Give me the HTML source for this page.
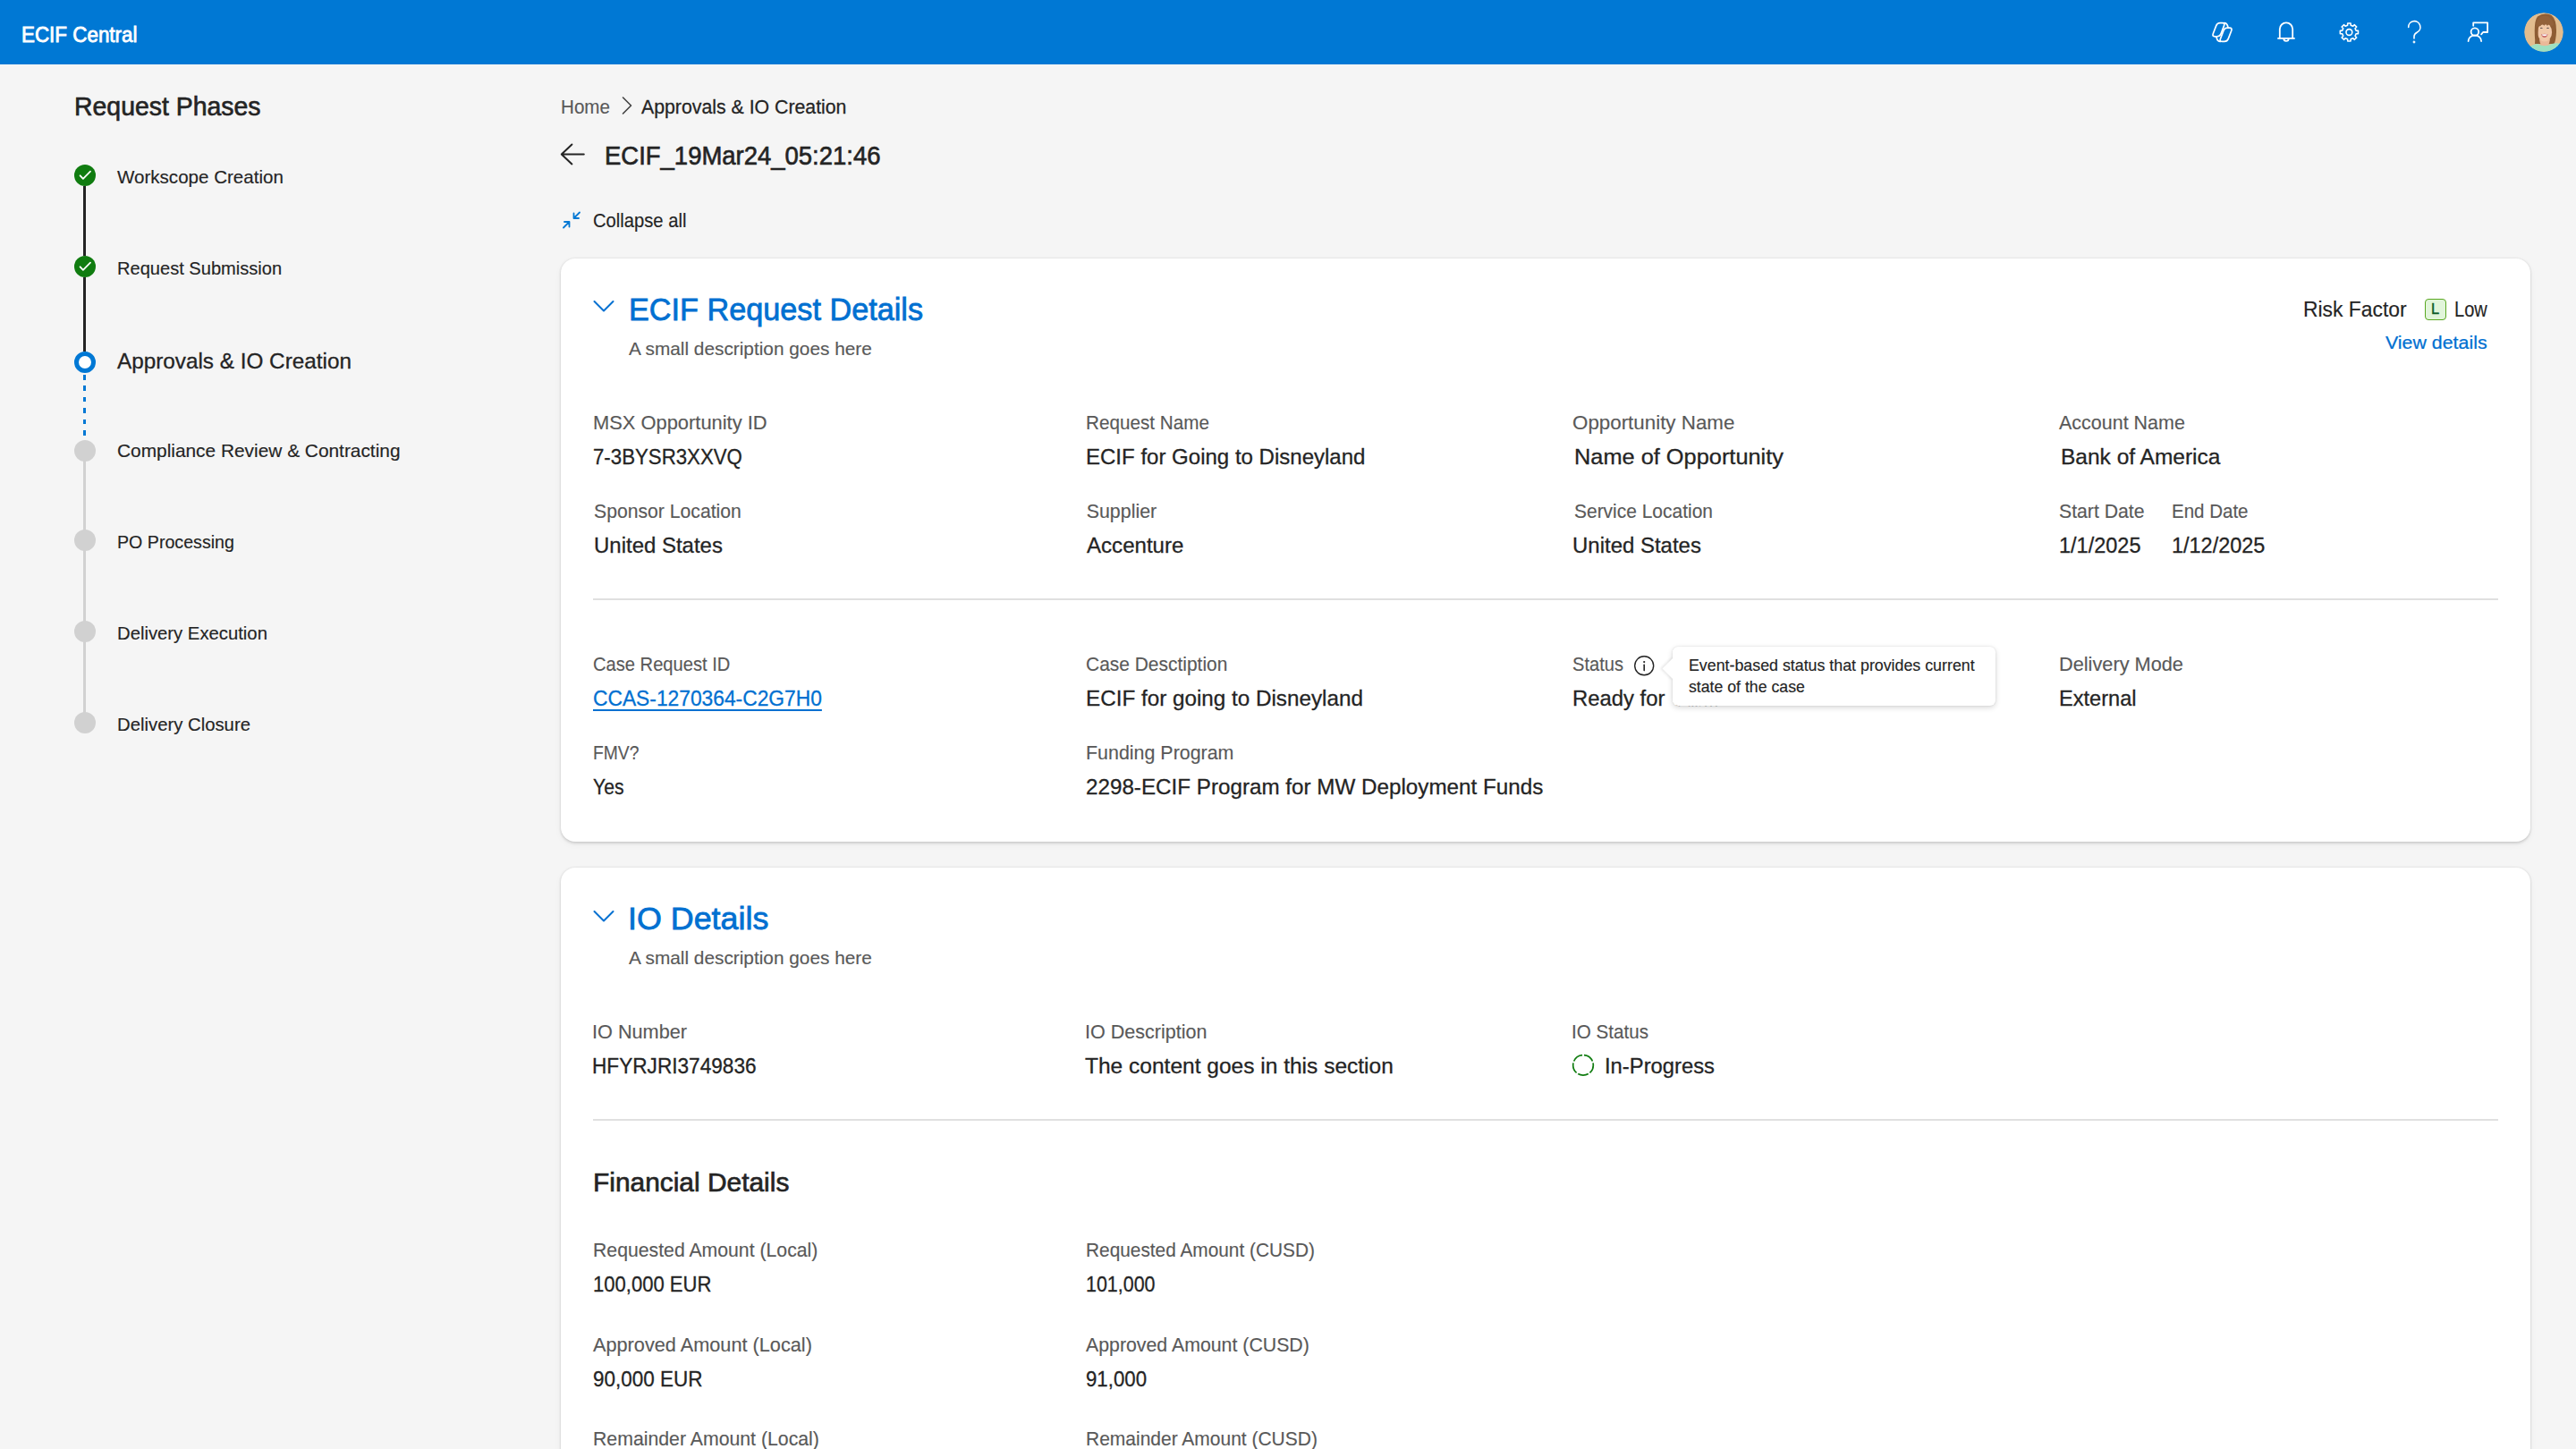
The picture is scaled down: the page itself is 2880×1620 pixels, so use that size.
<!DOCTYPE html>
<html><head><meta charset="utf-8"><style>
*{margin:0;padding:0;box-sizing:border-box}
html,body{width:2880px;height:1620px;overflow:hidden;background:#f5f5f5;font-family:"Liberation Sans",sans-serif}
.t{position:absolute;white-space:nowrap;line-height:1;transform-origin:0 0}
#hdr{position:absolute;left:0;top:0;width:2880px;height:72px;background:#0078d4}
#avatar{position:absolute;left:2822px;top:14px;width:44px;height:44px;border-radius:50%;overflow:hidden}
.vl{position:absolute;width:3px}
.dl{position:absolute;width:3px;background:repeating-linear-gradient(to bottom,#0078d4 0,#0078d4 5.5px,transparent 5.5px,transparent 12.4px)}
.dot{position:absolute;left:82.5px;width:24px;height:24px;border-radius:50%}
.dot.done{background:#107c10}
.dot.cur{background:#fff;border:5px solid #0078d4}
.dot.todo{background:#d1d1d1}
.dot svg{position:absolute;left:0;top:0}
.card{position:absolute;left:627px;width:2202px;background:#fff;border-radius:16px;box-shadow:0 1.5px 3px rgba(0,0,0,0.12),0 3px 9px rgba(0,0,0,0.04),0 0 3px rgba(0,0,0,0.08)}
.hr{position:absolute;left:663px;width:2130px;height:2px;background:#e0e0e0}
#lbadge{position:absolute;left:2710.7px;top:334.4px;width:24px;height:24px;border:1.7px solid #5aa822;background:#e1f5da;border-radius:4px}
#tip{position:absolute;left:1870px;top:723px;width:360.5px;height:66px;background:#fff;border-radius:6px;box-shadow:0 2px 6px rgba(0,0,0,0.16),0 0 2px rgba(0,0,0,0.12)}
#tip .arrow{position:absolute;left:-8.5px;top:15.5px;width:17px;height:17px;background:#fff;transform:rotate(45deg);box-shadow:-1.5px 1.5px 3px rgba(0,0,0,0.10)}
#tip .cover{position:absolute;left:0;top:4px;width:14px;height:58px;background:#fff}
</style></head><body>
<div id="hdr"></div>
<div class="t" style="left:23.7px;top:27px;font-size:24.4px;color:#ffffff;transform:scaleX(0.9184);-webkit-text-stroke:0.29px #ffffff;-webkit-text-stroke:0.85px #fff;">ECIF Central</div>
<svg width="420" height="72" viewBox="0 0 420 72" style="position:absolute;left:2448px;top:0">
<g fill="none" stroke="#fff" stroke-width="1.8" stroke-linecap="round" stroke-linejoin="round">
 <g transform="translate(36.5,36)" stroke-width="1.7">
  <path d="M-6.74,-7.41 Q-5.60,-10.40 -2.40,-10.40 L0.00,-10.40 Q3.20,-10.40 2.06,-7.41 L-1.46,1.81 Q-2.60,4.80 -5.80,4.80 L-8.20,4.80 Q-11.40,4.80 -10.26,1.81 Z"/>
  <path d="M1.46,-1.81 Q2.60,-4.80 5.80,-4.80 L8.20,-4.80 Q11.40,-4.80 10.26,-1.81 L6.74,7.41 Q5.60,10.40 2.40,10.40 L0.00,10.40 Q-3.20,10.40 -2.06,7.41 Z"/>
  <path d="M2.2,-10.4 Q5,-10.4 6,-7.2 L6.6,-4.8"/>
  <path d="M-2.2,10.4 Q-5,10.4 -6,7.2 L-6.6,4.8"/>
 </g>
 <g transform="translate(108,36)">
  <path d="M-7.2,6.6 V-3.4 A7.2,7.2 0 0 1 7.2,-3.4 V6.6"/>
  <path d="M-9,6.9 H9"/>
  <path d="M-2.7,7.2 A2.7,2.7 0 0 0 2.7,7.2"/>
 </g>
 <g transform="translate(178.4,36)" stroke-width="1.6">
  <circle r="3.4"/>
  <path d="M-1.78,-7.70 L-1.67,-10.06 L1.67,-10.06 L1.78,-7.70 L4.18,-6.70 L5.93,-8.30 L8.30,-5.93 L6.70,-4.18 L7.70,-1.78 L10.06,-1.67 L10.06,1.67 L7.70,1.78 L6.70,4.18 L8.30,5.93 L5.93,8.30 L4.18,6.70 L1.78,7.70 L1.67,10.06 L-1.67,10.06 L-1.78,7.70 L-4.18,6.70 L-5.93,8.30 L-8.30,5.93 L-6.70,4.18 L-7.70,1.78 L-10.06,1.67 L-10.06,-1.67 L-7.70,-1.78 L-6.70,-4.18 L-8.30,-5.93 L-5.93,-8.30 L-4.18,-6.70 Z"/>
 </g>
 <g transform="translate(251,36)">
  <path d="M-6.3,-5.6 A6.6,6.6 0 1 1 3.2,0.2 C0.8,1.6 0,2.8 0,4.8 V7" stroke-width="1.6"/>
  <circle cx="0" cy="11" r="0.5" fill="#fff"/>
 </g>
 <g transform="translate(322.5,36)">
  <path d="M-5.3,-7.2 V-10.6 H10.6 V0 H5.6 L3.6,2.4"/>
  <circle cx="-3.6" cy="-0.4" r="4.3"/>
  <path d="M-10.9,10 A7.2,6.6 0 0 1 3.6,10"/>
 </g>
</g>
</svg>
<div id="avatar"><svg width="44" height="44" viewBox="0 0 44 44">
<defs><clipPath id="ac"><circle cx="22" cy="22" r="21.8"/></clipPath></defs>
<g clip-path="url(#ac)">
<rect width="44" height="44" fill="#e2bd8f"/>
<path d="M12.2,31 Q10.5,10 15,4.5 Q22,-0.5 30.5,3 Q36.5,8 36,22 Q35.5,31 33.5,35 L12,35 Z" fill="#8e5d34"/>
<path d="M17,30 Q18,38 23,38 Q28,38 29,30 Z" fill="#ebb999"/>
<ellipse cx="23" cy="22" rx="8.1" ry="10.6" fill="#f1c9a8"/>
<path d="M13.5,18 Q13,5 22,3.5 Q32,3.5 33.5,17 Q31,13.5 29.5,15.5 Q28,12 26,15 Q24,11.5 22.5,14.8 Q20,12 18,15.5 Q16,13 13.5,18 Z" fill="#93623a"/>
<path d="M13,16 Q12.5,27 14.5,32 L16.5,32 Q15,25 15.8,17 Z" fill="#8e5d34"/>
<path d="M31.5,15 Q33,25 30.5,33 L34,33 Q36,22 33,14 Z" fill="#8e5d34"/>
<ellipse cx="19.3" cy="17.4" rx="1.4" ry="0.7" fill="#6b5a55"/>
<ellipse cx="26.5" cy="17.4" rx="1.4" ry="0.7" fill="#6b5a55"/>
<path d="M19,24.3 Q22.8,23.3 26.6,24.3 Q25.6,28 22.8,28 Q20,28 19,24.3 Z" fill="#c96a6a"/>
<path d="M19.6,24.5 Q22.8,23.8 26,24.5 Q25.6,26 22.8,26.2 Q20,26 19.6,24.5 Z" fill="#ffffff"/>
<path d="M0,44 L2,41 Q8,36 15,35 Q23,39.5 31,35 Q38,33.5 44,35.5 L44,44 Z" fill="#9ee0c1"/>
</g></svg></div>
<div class="t" style="left:83.0px;top:105px;font-size:29px;color:#242424;transform:scaleX(0.9798);-webkit-text-stroke:0.64px #242424;">Request Phases</div>
<div class="vl" style="left:93px;top:208px;height:78px;background:#242424"></div>
<div class="vl" style="left:93px;top:310px;height:83px;background:#242424"></div>
<div class="dl" style="left:93px;top:419px;height:72px;"></div>
<div class="vl" style="left:93px;top:515px;height:290px;background:#d1d1d1"></div>
<div class="dot done" style="top:184.4px"><svg width="24" height="24" viewBox="0 0 24 24"><path d="M6.6,12.3 L9.9,15.9 L18,7.7" fill="none" stroke="#fff" stroke-width="1.8" stroke-linecap="round" stroke-linejoin="round"/></svg></div>
<div class="t" style="left:131.2px;top:188px;font-size:20.7px;color:#242424;transform:scaleX(0.9936);-webkit-text-stroke:0.15px #242424;">Workscope Creation</div>
<div class="dot done" style="top:286.3px"><svg width="24" height="24" viewBox="0 0 24 24"><path d="M6.6,12.3 L9.9,15.9 L18,7.7" fill="none" stroke="#fff" stroke-width="1.8" stroke-linecap="round" stroke-linejoin="round"/></svg></div>
<div class="t" style="left:131.2px;top:290px;font-size:20.7px;color:#242424;transform:scaleX(0.9705);-webkit-text-stroke:0.15px #242424;">Request Submission</div>
<div class="dot cur" style="top:393.0px"></div>
<div class="t" style="left:131.2px;top:392px;font-size:24.4px;color:#242424;transform:scaleX(0.9958);-webkit-text-stroke:0.29px #242424;">Approvals &amp; IO Creation</div>
<div class="dot todo" style="top:492.0px"></div>
<div class="t" style="left:131.2px;top:494px;font-size:20.7px;color:#242424;transform:scaleX(1.0083);-webkit-text-stroke:0.15px #242424;">Compliance Review &amp; Contracting</div>
<div class="dot todo" style="top:592.0px"></div>
<div class="t" style="left:131.2px;top:596px;font-size:20.7px;color:#242424;transform:scaleX(0.9486);-webkit-text-stroke:0.15px #242424;">PO Processing</div>
<div class="dot todo" style="top:694.0px"></div>
<div class="t" style="left:131.2px;top:698px;font-size:20.7px;color:#242424;transform:scaleX(0.9802);-webkit-text-stroke:0.15px #242424;">Delivery Execution</div>
<div class="dot todo" style="top:796.0px"></div>
<div class="t" style="left:131.2px;top:800px;font-size:20.7px;color:#242424;transform:scaleX(0.9816);-webkit-text-stroke:0.15px #242424;">Delivery Closure</div>
<div class="t" style="left:626.9px;top:110px;font-size:21.4px;color:#595959;transform:scaleX(0.9632);-webkit-text-stroke:0.15px #595959;">Home</div>
<svg style="position:absolute;left:694px;top:107px" width="14" height="22" viewBox="0 0 14 22"><path d="M2.5,2 L11.5,11 L2.5,20" fill="none" stroke="#424242" stroke-width="1.6" stroke-linecap="round" stroke-linejoin="round"/></svg>
<div class="t" style="left:716.5px;top:110px;font-size:21.4px;color:#242424;transform:scaleX(0.9948);-webkit-text-stroke:0.26px #242424;">Approvals &amp; IO Creation</div>
<svg style="position:absolute;left:625px;top:158px" width="32" height="30" viewBox="0 0 32 30"><path d="M27.8,14.4 H3 M14.4,3.5 L2.8,14.4 L14.4,25.4" fill="none" stroke="#242424" stroke-width="2" stroke-linecap="round" stroke-linejoin="round"/></svg>
<div class="t" style="left:675.5px;top:159px;font-size:29.5px;color:#242424;transform:scaleX(0.9312);-webkit-text-stroke:0.65px #242424;">ECIF_19Mar24_05:21:46</div>
<svg style="position:absolute;left:626px;top:234px" width="26" height="24" viewBox="0 0 26 24"><g fill="none" stroke="#0078d4" stroke-width="1.8" stroke-linecap="round" stroke-linejoin="round"><path d="M4,20.5 L10.5,14 M5,14 H10.5 V19.5"/><path d="M22,3.5 L15.5,10 M21,10 H15.5 V4.5"/></g></svg>
<div class="t" style="left:662.6px;top:237px;font-size:21.4px;color:#242424;transform:scaleX(0.9439);-webkit-text-stroke:0.15px #242424;">Collapse all</div>
<div class="card" style="top:289px;height:652px"></div>
<svg style="position:absolute;left:660px;top:331px" width="30" height="22" viewBox="0 0 30 22"><path d="M4.5,6 L15,16.5 L25.5,6" fill="none" stroke="#0070d1" stroke-width="2" stroke-linecap="round" stroke-linejoin="round"/></svg>
<div class="t" style="left:703.0px;top:329px;font-size:34.5px;color:#0070d1;transform:scaleX(0.9919);-webkit-text-stroke:0.76px #0070d1;">ECIF Request Details</div>
<div class="t" style="left:703.4px;top:381px;font-size:19.8px;color:#595959;transform:scaleX(1.0518);-webkit-text-stroke:0.15px #595959;">A small description goes here</div>
<div class="t" style="left:2575.2px;top:334px;font-size:24.4px;color:#242424;transform:scaleX(0.9384);-webkit-text-stroke:0.15px #242424;">Risk Factor</div>
<div id="lbadge"><div class="t" style="left:0;top:0;width:100%;text-align:center;line-height:21px;font-size:16.5px;color:#0b5a26;-webkit-text-stroke:0.4px #0b5a26">L</div></div>
<div class="t" style="left:2744.1px;top:334px;font-size:24.4px;color:#242424;transform:scaleX(0.8214);-webkit-text-stroke:0.15px #242424;">Low</div>
<div class="t" style="left:2666.6px;top:374px;font-size:19.9px;color:#0070d1;transform:scaleX(1.0737);-webkit-text-stroke:0.24px #0070d1;">View details</div>
<div class="t" style="left:663.2px;top:463px;font-size:21.4px;color:#595959;transform:scaleX(1.0231);-webkit-text-stroke:0.15px #595959;">MSX Opportunity ID</div>
<div class="t" style="left:663.2px;top:499px;font-size:24.4px;color:#242424;transform:scaleX(0.9121);-webkit-text-stroke:0.29px #242424;">7-3BYSR3XXVQ</div>
<div class="t" style="left:1213.7px;top:463px;font-size:21.4px;color:#595959;transform:scaleX(0.9671);-webkit-text-stroke:0.15px #595959;">Request Name</div>
<div class="t" style="left:1213.7px;top:499px;font-size:24.4px;color:#242424;transform:scaleX(0.9849);-webkit-text-stroke:0.29px #242424;">ECIF for Going to Disneyland</div>
<div class="t" style="left:1757.8px;top:463px;font-size:21.4px;color:#595959;transform:scaleX(1.0449);-webkit-text-stroke:0.15px #595959;">Opportunity Name</div>
<div class="t" style="left:1760.0px;top:499px;font-size:24.4px;color:#242424;transform:scaleX(1.0395);-webkit-text-stroke:0.29px #242424;">Name of Opportunity</div>
<div class="t" style="left:2302.2px;top:463px;font-size:21.4px;color:#595959;transform:scaleX(1.0043);-webkit-text-stroke:0.15px #595959;">Account Name</div>
<div class="t" style="left:2304.2px;top:499px;font-size:24.4px;color:#242424;transform:scaleX(1.0045);-webkit-text-stroke:0.29px #242424;">Bank of America</div>
<div class="t" style="left:664.0px;top:562px;font-size:21.4px;color:#595959;transform:scaleX(0.9904);-webkit-text-stroke:0.15px #595959;">Sponsor Location</div>
<div class="t" style="left:664.0px;top:598px;font-size:24.4px;color:#242424;transform:scaleX(0.9829);-webkit-text-stroke:0.29px #242424;">United States</div>
<div class="t" style="left:1214.7px;top:562px;font-size:21.4px;color:#595959;transform:scaleX(1.0000);-webkit-text-stroke:0.15px #595959;">Supplier</div>
<div class="t" style="left:1214.7px;top:598px;font-size:24.4px;color:#242424;transform:scaleX(0.9873);-webkit-text-stroke:0.29px #242424;">Accenture</div>
<div class="t" style="left:1759.5px;top:562px;font-size:21.4px;color:#595959;transform:scaleX(0.9798);-webkit-text-stroke:0.15px #595959;">Service Location</div>
<div class="t" style="left:1758.2px;top:598px;font-size:24.4px;color:#242424;transform:scaleX(0.9829);-webkit-text-stroke:0.29px #242424;">United States</div>
<div class="t" style="left:2302.2px;top:562px;font-size:21.4px;color:#595959;transform:scaleX(0.9917);-webkit-text-stroke:0.15px #595959;">Start Date</div>
<div class="t" style="left:2302.2px;top:598px;font-size:24.4px;color:#242424;transform:scaleX(0.9632);-webkit-text-stroke:0.29px #242424;">1/1/2025</div>
<div class="t" style="left:2428.2px;top:562px;font-size:21.4px;color:#595959;transform:scaleX(0.9585);-webkit-text-stroke:0.15px #595959;">End Date</div>
<div class="t" style="left:2428.2px;top:598px;font-size:24.4px;color:#242424;transform:scaleX(0.9622);-webkit-text-stroke:0.29px #242424;">1/12/2025</div>
<div class="hr" style="top:668.5px"></div>
<div class="t" style="left:662.7px;top:733px;font-size:21.4px;color:#595959;transform:scaleX(0.9417);-webkit-text-stroke:0.15px #595959;">Case Request ID</div>
<div class="t" style="left:662.7px;top:769px;font-size:24.4px;color:#0070d1;transform:scaleX(0.9343);-webkit-text-stroke:0.29px #0070d1;text-decoration:underline;text-underline-offset:4px;text-decoration-thickness:1.5px;">CCAS-1270364-C2G7H0</div>
<div class="t" style="left:1213.7px;top:733px;font-size:21.4px;color:#595959;transform:scaleX(0.9796);-webkit-text-stroke:0.15px #595959;">Case Desctiption</div>
<div class="t" style="left:1213.7px;top:769px;font-size:24.4px;color:#242424;transform:scaleX(0.9939);-webkit-text-stroke:0.29px #242424;">ECIF for going to Disneyland</div>
<div class="t" style="left:1757.8px;top:733px;font-size:21.4px;color:#595959;transform:scaleX(0.9390);-webkit-text-stroke:0.15px #595959;">Status</div>
<div class="t" style="left:1757.8px;top:769px;font-size:24.4px;color:#242424;transform:scaleX(0.9783);-webkit-text-stroke:0.29px #242424;">Ready for</div>
<div class="t" style="left:1871.2px;top:769px;font-size:24.4px;color:#242424;transform:scaleX(0.7849);-webkit-text-stroke:0.29px #242424;">Subm</div>
<div class="t" style="left:2302.2px;top:733px;font-size:21.4px;color:#595959;transform:scaleX(1.0161);-webkit-text-stroke:0.15px #595959;">Delivery Mode</div>
<div class="t" style="left:2302.2px;top:769px;font-size:24.4px;color:#242424;transform:scaleX(0.9665);-webkit-text-stroke:0.29px #242424;">External</div>
<div class="t" style="left:662.7px;top:832px;font-size:21.4px;color:#595959;transform:scaleX(0.9019);-webkit-text-stroke:0.15px #595959;">FMV?</div>
<div class="t" style="left:662.7px;top:868px;font-size:24.4px;color:#242424;transform:scaleX(0.8668);-webkit-text-stroke:0.29px #242424;">Yes</div>
<div class="t" style="left:1213.7px;top:832px;font-size:21.4px;color:#595959;transform:scaleX(1.0012);-webkit-text-stroke:0.15px #595959;">Funding Program</div>
<div class="t" style="left:1213.7px;top:868px;font-size:24.4px;color:#242424;transform:scaleX(0.9926);-webkit-text-stroke:0.29px #242424;">2298-ECIF Program for MW Deployment Funds</div>
<svg style="position:absolute;left:1826px;top:732px" width="24" height="24" viewBox="0 0 24 24"><circle cx="12.2" cy="12.3" r="10.5" fill="none" stroke="#242424" stroke-width="1.4"/><path d="M12.2,11.2 V17.6" stroke="#242424" stroke-width="1.6" stroke-linecap="round"/><circle cx="12.2" cy="8.1" r="1.1" fill="#242424"/></svg>
<div id="tip"><div class="arrow"></div><div class="cover"></div></div>
<div class="t" style="left:1888.2px;top:735px;font-size:18.3px;color:#242424;transform:scaleX(0.9738);-webkit-text-stroke:0.15px #242424;">Event-based status that provides current</div>
<div class="t" style="left:1888.2px;top:759px;font-size:18.3px;color:#242424;transform:scaleX(0.9680);-webkit-text-stroke:0.15px #242424;">state of the case</div>
<div class="card" style="top:970px;height:700px"></div>
<svg style="position:absolute;left:660px;top:1013px" width="30" height="22" viewBox="0 0 30 22"><path d="M4.5,6 L15,16.5 L25.5,6" fill="none" stroke="#0070d1" stroke-width="2" stroke-linecap="round" stroke-linejoin="round"/></svg>
<div class="t" style="left:702.0px;top:1010px;font-size:34.5px;color:#0070d1;transform:scaleX(1.0389);-webkit-text-stroke:0.76px #0070d1;">IO Details</div>
<div class="t" style="left:703.4px;top:1062px;font-size:19.8px;color:#595959;transform:scaleX(1.0518);-webkit-text-stroke:0.15px #595959;">A small description goes here</div>
<div class="t" style="left:662.0px;top:1144px;font-size:21.4px;color:#595959;transform:scaleX(1.0134);-webkit-text-stroke:0.15px #595959;">IO Number</div>
<div class="t" style="left:662.0px;top:1180px;font-size:24.4px;color:#242424;transform:scaleX(0.9273);-webkit-text-stroke:0.29px #242424;">HFYRJRI3749836</div>
<div class="t" style="left:1213.4px;top:1144px;font-size:21.4px;color:#595959;transform:scaleX(1.0066);-webkit-text-stroke:0.15px #595959;">IO Description</div>
<div class="t" style="left:1213.4px;top:1180px;font-size:24.4px;color:#242424;transform:scaleX(1.0052);-webkit-text-stroke:0.29px #242424;">The content goes in this section</div>
<div class="t" style="left:1757.1px;top:1144px;font-size:21.4px;color:#595959;transform:scaleX(0.9641);-webkit-text-stroke:0.15px #595959;">IO Status</div>
<svg style="position:absolute;left:1756px;top:1178px" width="28" height="26" viewBox="0 0 28 26"><circle cx="14" cy="12.9" r="11.3" fill="none" stroke="#107c10" stroke-width="1.7" pathLength="100" stroke-dasharray="17.2 2.8" stroke-dashoffset="3.6"/></svg>
<div class="t" style="left:1793.5px;top:1180px;font-size:24.4px;color:#242424;transform:scaleX(0.9754);-webkit-text-stroke:0.29px #242424;">In-Progress</div>
<div class="hr" style="top:1251px"></div>
<div class="t" style="left:662.5px;top:1307px;font-size:29.5px;color:#242424;transform:scaleX(1.0134);-webkit-text-stroke:0.65px #242424;">Financial Details</div>
<div class="t" style="left:662.7px;top:1388px;font-size:21.4px;color:#595959;transform:scaleX(0.9925);-webkit-text-stroke:0.15px #595959;">Requested Amount (Local)</div>
<div class="t" style="left:662.7px;top:1424px;font-size:24.4px;color:#242424;transform:scaleX(0.9044);-webkit-text-stroke:0.29px #242424;">100,000 EUR</div>
<div class="t" style="left:1213.9px;top:1388px;font-size:21.4px;color:#595959;transform:scaleX(0.9738);-webkit-text-stroke:0.15px #595959;">Requested Amount (CUSD)</div>
<div class="t" style="left:1213.9px;top:1424px;font-size:24.4px;color:#242424;transform:scaleX(0.8787);-webkit-text-stroke:0.29px #242424;">101,000</div>
<div class="t" style="left:662.7px;top:1494px;font-size:21.4px;color:#595959;transform:scaleX(1.0145);-webkit-text-stroke:0.15px #595959;">Approved Amount (Local)</div>
<div class="t" style="left:662.7px;top:1530px;font-size:24.4px;color:#242424;transform:scaleX(0.9217);-webkit-text-stroke:0.29px #242424;">90,000 EUR</div>
<div class="t" style="left:1213.9px;top:1494px;font-size:21.4px;color:#595959;transform:scaleX(0.9960);-webkit-text-stroke:0.15px #595959;">Approved Amount (CUSD)</div>
<div class="t" style="left:1213.9px;top:1530px;font-size:24.4px;color:#242424;transform:scaleX(0.9115);-webkit-text-stroke:0.29px #242424;">91,000</div>
<div class="t" style="left:662.7px;top:1599px;font-size:21.4px;color:#595959;transform:scaleX(0.9941);-webkit-text-stroke:0.15px #595959;">Remainder Amount (Local)</div>
<div class="t" style="left:1213.9px;top:1599px;font-size:21.4px;color:#595959;transform:scaleX(0.9811);-webkit-text-stroke:0.15px #595959;">Remainder Amount (CUSD)</div>
<script>(function(){var w=window.innerWidth||2880;var s=w/2880;if(Math.abs(s-1)>0.01){document.documentElement.style.zoom=s;}})();</script>
</body></html>
